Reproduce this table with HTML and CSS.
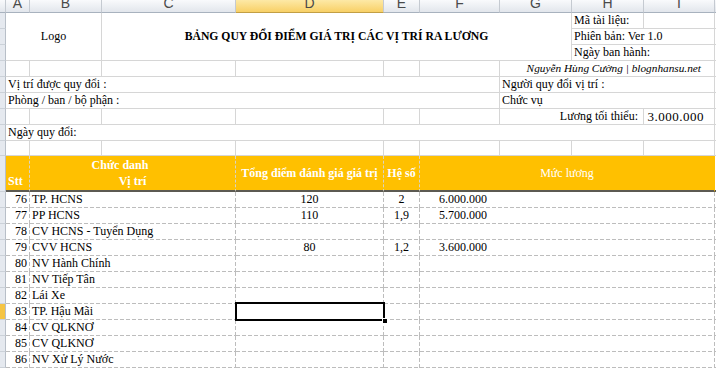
FILE: index.html
```html
<!DOCTYPE html>
<html lang="vi">
<head>
<meta charset="utf-8">
<title>Bảng quy đổi điểm giá trị các vị trí ra lương</title>
<link rel="stylesheet" href="styles.css">
</head>
<body>
<div class="sheet">
  <!-- column headers -->
  <div class="ch corner"></div>
  <div class="ch"><span>A</span></div>
  <div class="ch"><span>B</span></div>
  <div class="ch"><span>C</span></div>
  <div class="ch sel"><span>D</span></div>
  <div class="ch"><span>E</span></div>
  <div class="ch"><span>F</span></div>
  <div class="ch"><span>G</span></div>
  <div class="ch"><span>H</span></div>
  <div class="ch"><span>I</span></div>
  <div class="ch j"></div>

  <!-- rows 1-3 -->
  <div class="rh"></div>
  <div class="c s2 r3 center">Logo</div>
  <div class="c s5 r3 center title">BẢNG QUY ĐỔI ĐIỂM GIÁ TRỊ CÁC VỊ TRÍ RA LƯƠNG</div>
  <div class="c">Mã tài liệu:</div>
  <div class="c"></div>
  <div class="c j"></div>

  <div class="rh"></div>
  <div class="c s2">Phiên bản: Ver 1.0</div>
  <div class="c j"></div>

  <div class="rh"></div>
  <div class="c s2">Ngày ban hành:</div>
  <div class="c j"></div>

  <!-- row 4 -->
  <div class="rh"></div>
  <div class="c"></div><div class="c"></div><div class="c"></div><div class="c"></div><div class="c"></div><div class="c"></div>
  <div class="c s3 right author">Nguyễn Hùng Cường | blognhansu.net</div>
  <div class="c j"></div>

  <!-- row 5 -->
  <div class="rh"></div>
  <div class="c s6">Vị trí được quy đổi :</div>
  <div class="c s3">Người quy đổi vị trí :</div>
  <div class="c j"></div>

  <!-- row 6 -->
  <div class="rh"></div>
  <div class="c s6">Phòng / ban / bộ phận :</div>
  <div class="c s3">Chức vụ</div>
  <div class="c j"></div>

  <!-- row 7 -->
  <div class="rh"></div>
  <div class="c"></div><div class="c"></div><div class="c"></div><div class="c"></div><div class="c"></div><div class="c"></div>
  <div class="c s2 right min-label">Lương tối thiểu:</div>
  <div class="c right min-value">3.000.000</div>
  <div class="c j"></div>

  <!-- row 8 -->
  <div class="rh"></div>
  <div class="c s9">Ngày quy đổi:</div>
  <div class="c j"></div>

  <!-- row 9 -->
  <div class="rh"></div>
  <div class="c"></div><div class="c"></div><div class="c"></div><div class="c"></div><div class="c"></div>
  <div class="c"></div><div class="c"></div><div class="c"></div><div class="c"></div>
  <div class="c j"></div>

  <!-- table header -->
  <div class="rh"></div>
  <div class="hd stt">Stt</div>
  <div class="hd s2 role">
    <div class="role-top">Chức danh</div>
    <div class="role-bottom">Vị trí</div>
  </div>
  <div class="hd center">Tổng điểm đánh giá giá trị</div>
  <div class="hd center">Hệ số</div>
  <div class="hd s4 center plain">Mức lương</div>
  <div class="c j blank"></div>

  <!-- data rows -->
  <div class="rh"></div>
  <div class="d num">76</div><div class="d s2">TP. HCNS</div><div class="d center">120</div><div class="d center">2</div><div class="d s4 money">6.000.000</div>
  <div class="d j"></div>

  <div class="rh"></div>
  <div class="d num">77</div><div class="d s2">PP HCNS</div><div class="d center">110</div><div class="d center">1,9</div><div class="d s4 money">5.700.000</div>
  <div class="d j"></div>

  <div class="rh"></div>
  <div class="d num">78</div><div class="d s2">CV HCNS - Tuyển Dụng</div><div class="d"></div><div class="d"></div><div class="d s4"></div>
  <div class="d j"></div>

  <div class="rh"></div>
  <div class="d num">79</div><div class="d s2">CVV HCNS</div><div class="d center">80</div><div class="d center">1,2</div><div class="d s4 money">3.600.000</div>
  <div class="d j"></div>

  <div class="rh"></div>
  <div class="d num">80</div><div class="d s2">NV Hành Chính</div><div class="d"></div><div class="d"></div><div class="d s4"></div>
  <div class="d j"></div>

  <div class="rh"></div>
  <div class="d num">81</div><div class="d s2">NV Tiếp Tân</div><div class="d"></div><div class="d"></div><div class="d s4"></div>
  <div class="d j"></div>

  <div class="rh"></div>
  <div class="d num">82</div><div class="d s2">Lái Xe</div><div class="d"></div><div class="d"></div><div class="d s4"></div>
  <div class="d j"></div>

  <div class="rh sel"></div>
  <div class="d num">83</div><div class="d s2">TP. Hậu Mãi</div><div class="d cur"></div><div class="d"></div><div class="d s4"></div>
  <div class="d j"></div>

  <div class="rh"></div>
  <div class="d num">84</div><div class="d s2">CV QLKNƠ</div><div class="d"></div><div class="d"></div><div class="d s4"></div>
  <div class="d j"></div>

  <div class="rh"></div>
  <div class="d num">85</div><div class="d s2">CV QLKNƠ</div><div class="d"></div><div class="d"></div><div class="d s4"></div>
  <div class="d j"></div>

  <div class="rh"></div>
  <div class="d num">86</div><div class="d s2">NV Xử Lý Nước</div><div class="d"></div><div class="d"></div><div class="d s4"></div>
  <div class="d j"></div>
</div>
</body>
</html>
```

FILE: styles.css
```css
html, body {
  margin: 0;
  padding: 0;
  background: #fff;
  overflow: hidden;
}

body {
  font-family: "Liberation Serif", "Times New Roman", serif;
  font-size: 12px;
  color: #000;
}

.sheet {
  display: grid;
  grid-template-columns: 6px 24px 72px 134px 148px 36px 80px 72px 72px 71px 1fr;
  grid-template-rows: 13px repeat(8, 16px) 15px 36px repeat(11, 16px);
  width: 716px;
}

/* column headers */
.ch {
  box-sizing: border-box;
  background: linear-gradient(#f9fafc, #e2e6ec);
  border-right: 1px solid #c5cad1;
  border-bottom: 1px solid #a8b2be;
  font-family: "Liberation Sans", Arial, sans-serif;
  font-size: 14px;
  color: #4a4a4a;
  text-align: center;
  overflow: hidden;
}
.ch span {
  display: block;
  line-height: 14px;
  margin-top: -4px;
}
.ch.sel {
  background: linear-gradient(#fde9a6, #f8d066);
  border-bottom-color: #c29f45;
}
.ch.j { border-right: none; }

/* row headers */
.rh {
  box-sizing: border-box;
  background: #e5e9ef;
  border-right: 1px solid #b8bfc8;
  border-bottom: 1px solid #cbd1d8;
}
.rh.sel { background: #f5c443; }

/* plain cells */
.c {
  box-sizing: border-box;
  border-right: 1px solid #d6d6d6;
  border-bottom: 1px solid #d6d6d6;
  padding: 0 2px;
  white-space: nowrap;
  overflow: hidden;
  display: flex;
  align-items: center;
  line-height: 15px;
}
.c.j { border-right: none; padding: 0; }

.s2 { grid-column: span 2; }
.s3 { grid-column: span 3; }
.s4 { grid-column: span 4; }
.s5 { grid-column: span 5; }
.s6 { grid-column: span 6; }
.s9 { grid-column: span 9; }
.r3 { grid-row: span 3; }

.center { justify-content: center; text-align: center; }
.right { justify-content: flex-end; }

.title {
  font-weight: bold;
  font-size: 11.7px;
  padding-bottom: 1px;
}
.author {
  font-style: italic;
  font-size: 11.3px;
  padding-right: 13px;
}
.min-label { padding-right: 5px; }
.min-value { padding-right: 10px; font-size: 13px; letter-spacing: 0.5px; }

/* orange header */
.hd {
  box-sizing: border-box;
  background: #ffc000;
  color: #fff;
  font-weight: bold;
  border-right: 1px dashed #d9d4c4;
  border-bottom: 2px solid #5c5a52;
  white-space: nowrap;
  overflow: hidden;
  display: flex;
  align-items: center;
  line-height: 16px;
}
.hd.plain { font-weight: normal; border-right: 1px solid #ffc000; }
.hd.stt {
  align-items: flex-end;
  padding: 0 0 1px 2px;
}
.role {
  flex-direction: column;
  align-items: stretch;
  justify-content: center;
  text-align: center;
}
.role-top { padding-right: 25px; }
.c.blank { border-bottom: 2px solid #5c5a52; }

/* data cells with dashed grid */
.d {
  box-sizing: border-box;
  padding: 0 3px 1px 2px;
  white-space: nowrap;
  overflow: hidden;
  display: flex;
  align-items: center;
  line-height: 15px;
  background-image:
    repeating-linear-gradient(to right, #bdbdbd 0 4px, transparent 4px 6px),
    repeating-linear-gradient(to bottom, #bdbdbd 0 4px, transparent 4px 6px);
  background-size: 100% 1px, 1px 100%;
  background-position: left bottom, right top;
  background-repeat: no-repeat;
}
.d.j { background-size: 100% 1px, 0 0; padding: 0; }
.d.num { justify-content: flex-end; padding-right: 3px; }
.d.money { padding-left: 19px; }

.d.cur {
  position: relative;
  overflow: visible;
  z-index: 1;
}
.d.cur::after {
  content: "";
  position: absolute;
  top: -2px;
  left: -1px;
  right: -1px;
  bottom: -1px;
  border: 2px solid #000;
}
.d.cur::before {
  content: "";
  position: absolute;
  right: -4px;
  bottom: -4px;
  width: 4px;
  height: 4px;
  background: #000;
  border: 1px solid #fff;
  z-index: 2;
}
```
